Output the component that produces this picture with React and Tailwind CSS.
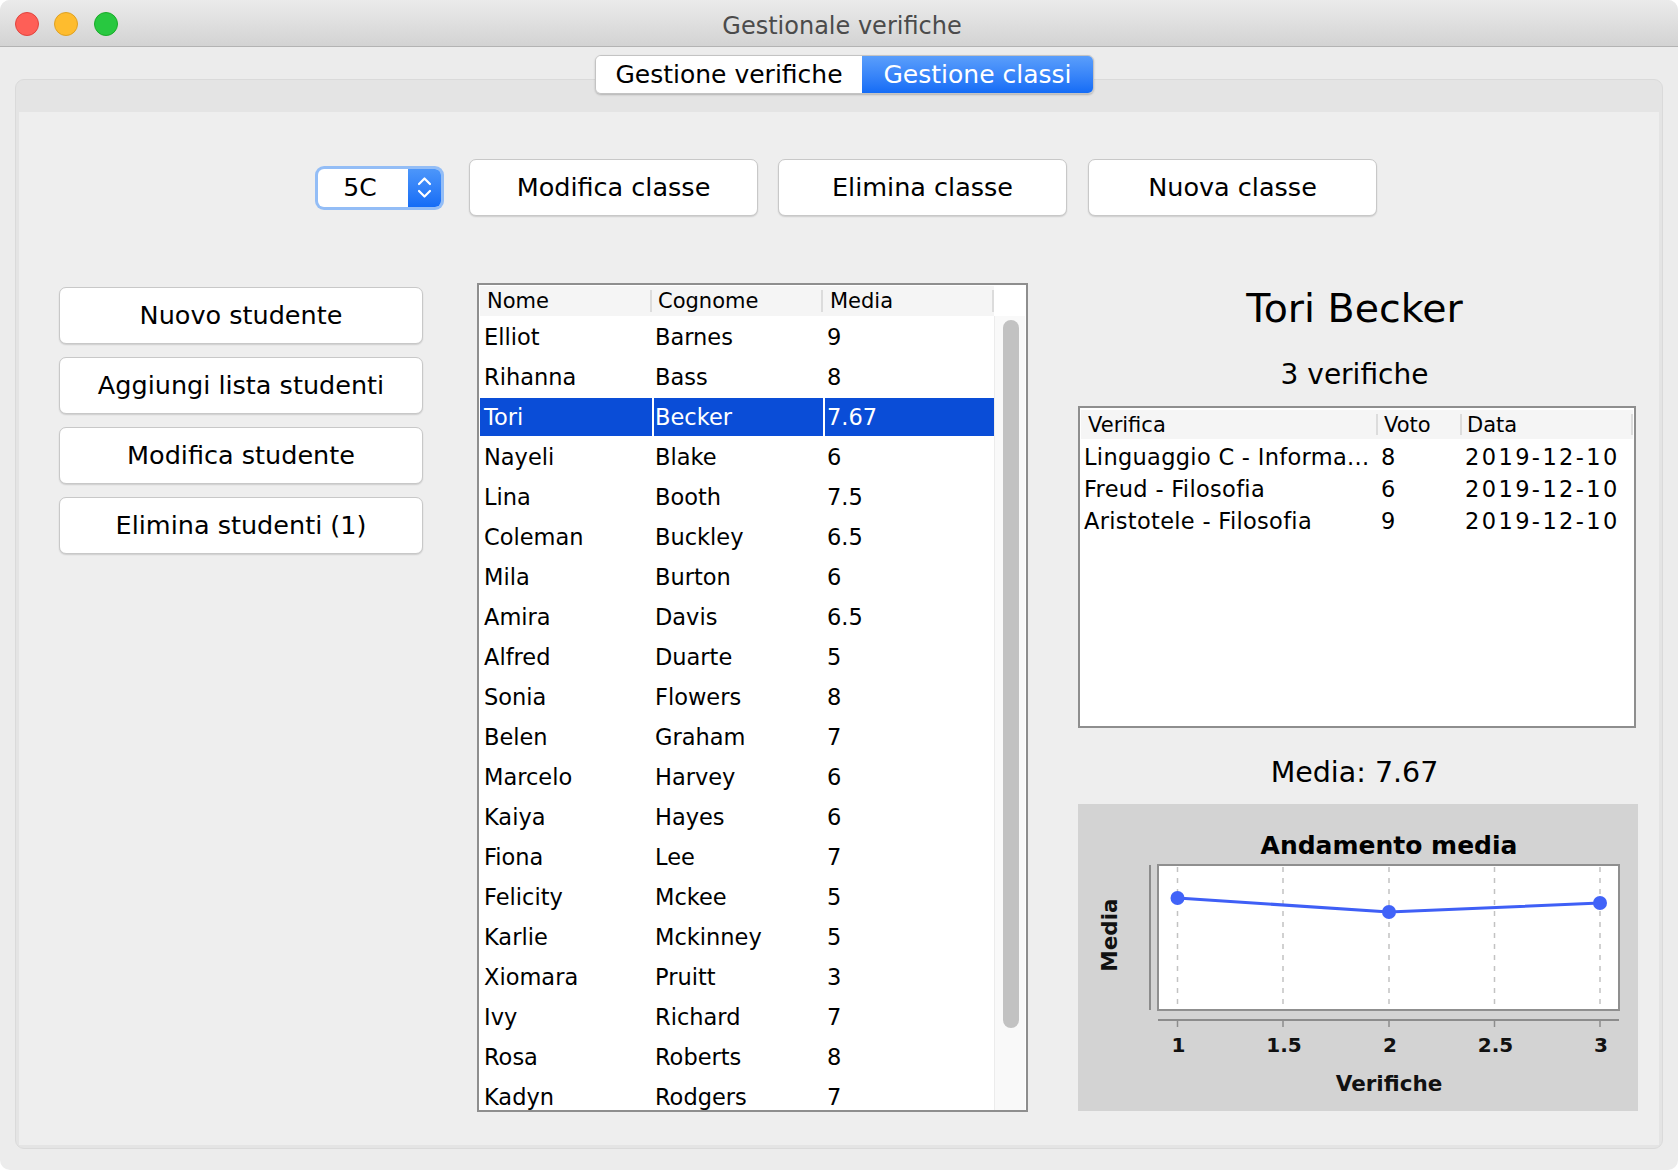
import React from 'react';

const students = [
  ['Elliot', 'Barnes', '9'],
  ['Rihanna', 'Bass', '8'],
  ['Tori', 'Becker', '7.67'],
  ['Nayeli', 'Blake', '6'],
  ['Lina', 'Booth', '7.5'],
  ['Coleman', 'Buckley', '6.5'],
  ['Mila', 'Burton', '6'],
  ['Amira', 'Davis', '6.5'],
  ['Alfred', 'Duarte', '5'],
  ['Sonia', 'Flowers', '8'],
  ['Belen', 'Graham', '7'],
  ['Marcelo', 'Harvey', '6'],
  ['Kaiya', 'Hayes', '6'],
  ['Fiona', 'Lee', '7'],
  ['Felicity', 'Mckee', '5'],
  ['Karlie', 'Mckinney', '5'],
  ['Xiomara', 'Pruitt', '3'],
  ['Ivy', 'Richard', '7'],
  ['Rosa', 'Roberts', '8'],
  ['Kadyn', 'Rodgers', '7']
];

const verifiche = [
  ['Linguaggio C - Informa...', '8', '2019-12-10'],
  ['Freud - Filosofia', '6', '2019-12-10'],
  ['Aristotele - Filosofia', '9', '2019-12-10']
];

const ticks = [
  { x: 99.5, label: '1' },
  { x: 205, label: '1.5' },
  { x: 311, label: '2' },
  { x: 416.5, label: '2.5' },
  { x: 522, label: '3' }
];

function MacButton({ children, className = '' }) {
  return (
    <button
      className={`flex h-[57px] items-center justify-center rounded-[7px] border border-[#c8c8c8] bg-white text-[25.5px] text-black shadow-[0_1px_1.5px_rgba(0,0,0,0.14)] ${className}`}
    >
      {children}
    </button>
  );
}

function Chart() {
  return (
    <div className="flex h-[307px] w-[560px] flex-col bg-[#d3d3d3]">
      <div className="pl-[62px] pt-[27px] text-center text-[25px] font-bold leading-[30px] text-black">Andamento media</div>
      <svg width="560" height="245" className="block" fontFamily="DejaVu Sans, sans-serif">
        <line x1="72" y1="4" x2="72" y2="149" stroke="#8c8c8c" strokeWidth="2" />
        <rect x="80" y="4" width="461" height="145" fill="#ffffff" stroke="#8f8f8f" strokeWidth="2" />
        {ticks.map((t) => (
          <line key={`g${t.x}`} x1={t.x} y1="6" x2={t.x} y2="147" stroke="#c2c2c2" strokeWidth="1.5" strokeDasharray="5 6" />
        ))}
        <line x1="80" y1="159" x2="541" y2="159" stroke="#8c8c8c" strokeWidth="2" />
        {ticks.map((t) => (
          <line key={`t${t.x}`} x1={t.x} y1="159" x2={t.x} y2="166" stroke="#8c8c8c" strokeWidth="1.5" />
        ))}
        <polyline points="99.5,37 311,51 522,42" fill="none" stroke="#3f5ff6" strokeWidth="3" />
        <circle cx="99.5" cy="37" r="7" fill="#4163f8" />
        <circle cx="311" cy="51" r="7" fill="#4163f8" />
        <circle cx="522" cy="42" r="7" fill="#4163f8" />
        {ticks.map((t) => (
          <text key={`l${t.x}`} x={t.x + 1} y="191" fontSize="20" fontWeight="bold" textAnchor="middle" fill="#111">
            {t.label}
          </text>
        ))}
        <text x="311" y="230" fontSize="21.5" fontWeight="bold" textAnchor="middle" fill="#111">
          Verifiche
        </text>
        <text transform="translate(31 74) rotate(-90)" dy="0.36em" fontSize="21.5" fontWeight="bold" textAnchor="middle" fill="#111">
          Media
        </text>
      </svg>
    </div>
  );
}

function StudentTable() {
  return (
    <div className="h-[829px] w-[551px] overflow-hidden border-2 border-[#8e8e8e] bg-white p-px">
      <div className="flex h-[30px] text-[21px] leading-[30px] text-black">
        <div className="flex w-[514px] bg-[#f5f5f5]">
          <div className="my-[4px] w-[172px] border-r-2 border-[#dcdcdc] pl-[7px] leading-[22px]">Nome</div>
          <div className="my-[4px] w-[171px] border-r-2 border-[#dcdcdc] pl-[6px] leading-[22px]">Cognome</div>
          <div className="my-[4px] w-[171px] border-r-2 border-[#dcdcdc] pl-[7px] leading-[22px]">Media</div>
        </div>
      </div>
      <div className="flex">
        <div className="w-[514px] pt-px">
          {students.map((s, i) => {
            const selected = i === 2;
            return (
              <div key={s[0]} className={`flex h-10 text-[22.5px] ${selected ? 'py-px text-white' : 'text-black'}`}>
                <div className={`w-[172px] pl-[4px] ${selected ? 'bg-[#0a4dd7] leading-[38px]' : 'leading-[40px]'}`}>{s[0]}</div>
                <div className={`w-[171px] ${selected ? 'border-l-2 border-white bg-[#0a4dd7] pl-[1px] leading-[38px]' : 'pl-[3px] leading-[40px]'}`}>{s[1]}</div>
                <div className={`w-[171px] ${selected ? 'border-l-2 border-white bg-[#0a4dd7] pl-[2px] leading-[38px]' : 'pl-[4px] leading-[40px]'}`}>{s[2]}</div>
              </div>
            );
          })}
        </div>
        <div className="h-[794px] w-[31px] border-l border-[#ececec] bg-[#f9f9f9] pl-[8px] pt-[4px]">
          <div className="h-[708px] w-[16px] rounded-full bg-[#c2c2c2]" />
        </div>
      </div>
    </div>
  );
}

function VerificheTable() {
  return (
    <div className="h-[322px] w-[558px] border-2 border-[#8e8e8e] bg-white px-px pt-[2px]">
      <div className="flex h-[29px] bg-[#f5f5f5] text-[21px] leading-[21px] text-black">
        <div className="my-[4px] w-[297px] border-r-2 border-[#dcdcdc] pl-[7px] pt-px">Verifica</div>
        <div className="my-[4px] w-[84px] border-r-2 border-[#dcdcdc] pl-[6px] pt-px">Voto</div>
        <div className="my-[4px] w-[171px] border-r-2 border-[#dcdcdc] pl-[5px] pt-px">Data</div>
      </div>
      <div className="pt-[2px]">
        {verifiche.map((v) => (
          <div key={v[0]} className="flex h-8 text-[22.5px] leading-8 text-black">
            <div className="w-[297px] whitespace-nowrap pl-[3px] tracking-[0.3px]">{v[0]}</div>
            <div className="w-[84px] pl-[3px]">{v[1]}</div>
            <div className="w-[171px] pl-[3px] tracking-[2.4px]">{v[2]}</div>
          </div>
        ))}
      </div>
    </div>
  );
}

export default function App() {
  return (
    <div className="h-[1170px] w-[1678px] overflow-hidden bg-white" style={{ fontFamily: '"DejaVu Sans", sans-serif' }}>
      <div className="flex h-[1170px] w-[1678px] flex-col overflow-hidden rounded-[10px] bg-[#ececec]">
        {/* title bar */}
        <div className="relative flex h-[47px] shrink-0 items-center border-b border-[#b3b3b3] bg-linear-to-b from-[#ebebeb] to-[#d3d3d3]">
          <div className="flex items-center gap-[15px] pl-[15px] pt-[2px]">
            <span className="h-[24px] w-[24px] rounded-full border border-[#e0443e] bg-[#fe5f57]" />
            <span className="h-[24px] w-[24px] rounded-full border border-[#dea123] bg-[#febc2e]" />
            <span className="ml-px h-[24px] w-[24px] rounded-full border border-[#1aab29] bg-[#28c840]" />
          </div>
          <div className="absolute inset-x-0 top-0 flex h-[47px] items-center justify-center pl-[6px] pt-[4px] text-[24px] text-[#4b4b4b]">
            Gestionale verifiche
          </div>
        </div>

        {/* tabbed pane */}
        <div className="relative mx-[15px] mt-[32px] h-[1070px] rounded-[9px] border border-[#dadada] bg-[#e4e4e4] px-[3px] pb-[3px] pt-[32px]">
          <div className="absolute left-[579px] top-[-25px] flex h-[39px] overflow-hidden rounded-[6px] border border-[#c3c3c3] shadow-[0_1px_2px_rgba(0,0,0,0.22)]">
            <div className="flex w-[266px] items-center justify-center bg-white text-[25px] text-black">Gestione verifiche</div>
            <div className="flex w-[231px] items-center justify-center bg-linear-to-b from-[#5a9efb] to-[#136cf6] text-[25px] text-white">
              Gestione classi
            </div>
          </div>

          <div className="h-[1033px] bg-[#eeeeee]">
            {/* top controls */}
            <div className="flex items-center pl-[299px] pt-[47px]">
              <div className="flex h-[38px] w-[123px] overflow-hidden rounded-[6px] bg-white ring-[3px] ring-[#93bdf6]">
                <div className="flex flex-1 items-center justify-center pr-[6px] text-[25px] text-black">5C</div>
                <div className="flex w-[33px] flex-col items-center justify-center gap-[3px] bg-linear-to-b from-[#4c96fa] to-[#146cf6]">
                  <svg width="15" height="10" viewBox="0 0 15 10">
                    <path d="M2 8 L7.5 2.5 L13 8" fill="none" stroke="#fff" strokeWidth="2.2" strokeLinecap="round" strokeLinejoin="round" />
                  </svg>
                  <svg width="15" height="10" viewBox="0 0 15 10">
                    <path d="M2 2 L7.5 7.5 L13 2" fill="none" stroke="#fff" strokeWidth="2.2" strokeLinecap="round" strokeLinejoin="round" />
                  </svg>
                </div>
              </div>
              <MacButton className="ml-[28px] w-[289px]">Modifica classe</MacButton>
              <MacButton className="ml-[20px] w-[289px]">Elimina classe</MacButton>
              <MacButton className="ml-[21px] w-[289px]">Nuova classe</MacButton>
            </div>

            {/* main section */}
            <div className="mt-[67px] flex items-start pl-[40px]">
              <div className="mt-[4px] flex w-[364px] flex-col gap-[13px]">
                <MacButton>Nuovo studente</MacButton>
                <MacButton>Aggiungi lista studenti</MacButton>
                <MacButton>Modifica studente</MacButton>
                <MacButton>Elimina studenti (1)</MacButton>
              </div>

              <div className="ml-[54px]">
                <StudentTable />
              </div>

              <div className="ml-[50px] flex w-[559px] flex-col items-center pr-[6px]">
                <div className="mt-[3px] h-[44px] text-[39.5px] leading-[44px] text-black">Tori Becker</div>
                <div className="mt-[28px] h-[34px] text-[28px] leading-[34px] text-black">3 verifiche</div>
                <div className="mt-[14px] self-start">
                  <VerificheTable />
                </div>
                <div className="mt-[28px] h-[34px] text-[28.5px] leading-[34px] text-black">Media: 7.67</div>
                <div className="mt-[14px] self-start">
                  <Chart />
                </div>
              </div>
            </div>
          </div>
        </div>
      </div>
    </div>
  );
}
